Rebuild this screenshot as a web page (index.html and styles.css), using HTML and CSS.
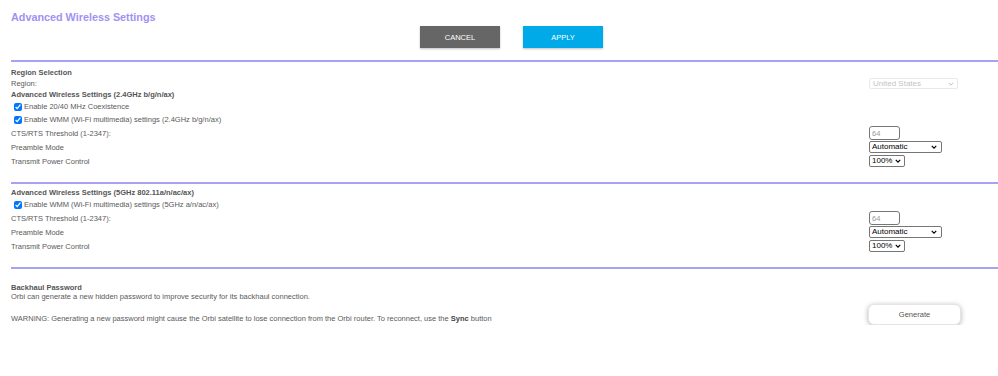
FILE: index.html
```html
<!DOCTYPE html>
<html lang="en">
<head>
  <meta charset="UTF-8" />
  <meta name="viewport" content="width=device-width, initial-scale=1.0" />
  <title>Advanced Wireless Settings</title>
  <link rel="stylesheet" href="styles.css">
</head>
<body>
  <div class="page">
    <h1 class="title">Advanced Wireless Settings</h1>

    <div class="actions">
      <button type="button" class="btn btn-cancel">CANCEL</button>
      <button type="button" class="btn btn-apply">APPLY</button>
    </div>

    <section class="block block-24">
      <div class="row row-head"><span class="head">Region Selection</span></div>
      <div class="row row-head">
        <span>Region:</span>
        <span class="pick pick-region">
          <select class="sel-region" disabled>
            <option>United States</option>
          </select>
          <svg viewBox="0 0 8 5"><path d="M1 1 L4 4 L7 1" /></svg>
        </span>
      </div>
      <div class="row row-head"><span class="head">Advanced Wireless Settings (2.4GHz b/g/n/ax)</span></div>
      <div class="row row-check">
        <label><input type="checkbox" checked /> Enable 20/40 MHz Coexistence</label>
      </div>
      <div class="row row-check">
        <label><input type="checkbox" checked /> Enable WMM (Wi-Fi multimedia) settings (2.4GHz b/g/n/ax)</label>
      </div>
      <div class="row row-field">
        <span>CTS/RTS Threshold (1-2347):</span>
        <input type="text" class="txt-rts" value="64" />
      </div>
      <div class="row row-field">
        <span>Preamble Mode</span>
        <span class="pick pick-preamble">
          <select class="sel-preamble">
            <option>Automatic</option>
            <option>Long Preamble</option>
            <option>Short Preamble</option>
          </select>
          <svg viewBox="0 0 8 5"><path d="M1 1 L4 4 L7 1" /></svg>
        </span>
      </div>
      <div class="row row-field">
        <span>Transmit Power Control</span>
        <span class="pick pick-power">
          <select class="sel-power">
            <option>100%</option>
            <option>75%</option>
            <option>50%</option>
            <option>25%</option>
          </select>
          <svg viewBox="0 0 8 5"><path d="M1 1 L4 4 L7 1" /></svg>
        </span>
      </div>
    </section>

    <section class="block block-5">
      <div class="row row-head"><span class="head">Advanced Wireless Settings (5GHz 802.11a/n/ac/ax)</span></div>
      <div class="row row-check">
        <label><input type="checkbox" checked /> Enable WMM (Wi-Fi multimedia) settings (5GHz a/n/ac/ax)</label>
      </div>
      <div class="row row-field">
        <span>CTS/RTS Threshold (1-2347):</span>
        <input type="text" class="txt-rts" value="64" />
      </div>
      <div class="row row-field">
        <span>Preamble Mode</span>
        <span class="pick pick-preamble">
          <select class="sel-preamble">
            <option>Automatic</option>
            <option>Long Preamble</option>
            <option>Short Preamble</option>
          </select>
          <svg viewBox="0 0 8 5"><path d="M1 1 L4 4 L7 1" /></svg>
        </span>
      </div>
      <div class="row row-field">
        <span>Transmit Power Control</span>
        <span class="pick pick-power">
          <select class="sel-power">
            <option>100%</option>
            <option>75%</option>
            <option>50%</option>
            <option>25%</option>
          </select>
          <svg viewBox="0 0 8 5"><path d="M1 1 L4 4 L7 1" /></svg>
        </span>
      </div>
    </section>

    <section class="block block-backhaul">
      <div class="head">Backhaul Password</div>
      <div class="note">Orbi can generate a new hidden password to improve security for its backhaul connection.</div>
      <div class="row row-warn">
        <span>WARNING: Generating a new password might cause the Orbi satellite to lose connection from the Orbi router. To reconnect, use the <b>Sync</b> button</span>
        <button type="button" class="btn-generate">Generate</button>
      </div>
    </section>
  </div>
</body>
</html>
```

FILE: styles.css
```css
body {
  margin: 0;
  padding: 0;
  background: white;
  font-family: "Liberation Sans", Arial, sans-serif;
  font-size: 7.5px;
  color: #5a5a5a;
}
.page {
  padding: 10px 0 0 11px;
}
.title {
  margin: 0;
  font-size: 10.8px;
  line-height: 14px;
  font-weight: bold;
  color: #9f92f2;
}
.actions {
  display: flex;
  gap: 23px;
  padding-left: 409px;
  margin-top: 2px;
}
.btn {
  width: 80px;
  height: 22px;
  border: none;
  color: white;
  font-family: "Liberation Sans", Arial, sans-serif;
  font-size: 7.5px;
  cursor: pointer;
  box-shadow: 0 1px 2px rgba(0, 0, 0, 0.25);
}
.btn-cancel {
  background: #666666;
}
.btn-apply {
  background: #00aae8;
}
.block {
  border-top: 2px solid #a9a1f1;
  margin-top: 12px;
  padding-top: 5px;
}
.block-5 {
  margin-top: 14px;
  padding-top: 3px;
}
.block-backhaul {
  margin-top: 14px;
  padding-top: 14px;
}
.row {
  display: grid;
  grid-template-columns: 858px 1fr;
  align-items: center;
}
.row-head {
  height: 11px;
}
.row-check {
  height: 13px;
}
.row-field {
  height: 14px;
}
.head {
  font-weight: bold;
  color: #555555;
}
label {
  display: flex;
  align-items: center;
  gap: 2px;
}
input[type="checkbox"] {
  width: 8px;
  height: 8px;
  margin: 0 0 0 3px;
  accent-color: #0075ff;
}
.pick {
  position: relative;
  display: block;
}
.pick svg {
  position: absolute;
  top: 50%;
  width: 6px;
  height: 4px;
  margin-top: -2px;
  pointer-events: none;
  fill: none;
  stroke: #000000;
  stroke-width: 1.6;
}
select,
.txt-rts {
  display: block;
  font-family: "Liberation Sans", Arial, sans-serif;
  font-size: 8px;
  box-sizing: border-box;
  padding: 0 0 0 2px;
  margin: 0;
  border: 1px solid #767676;
  border-radius: 2px;
  background: white;
  color: black;
}
select {
  appearance: none;
  -webkit-appearance: none;
  line-height: 10px;
}
.sel-region {
  width: 89px;
  height: 11px;
  border-color: #e0e0e0;
  color: #aaaaaa;
  padding-left: 3px;
}
.pick-region svg {
  left: 79px;
  stroke: #aaaaaa;
  stroke-width: 1;
}
.txt-rts {
  width: 31px;
  height: 14px;
  font-size: 7.5px;
  color: #9a9a9a;
  border-radius: 3px;
}
.sel-preamble {
  width: 73px;
  height: 12px;
}
.pick-preamble svg {
  left: 62px;
}
.sel-power {
  width: 36px;
  height: 12px;
}
.pick-power svg {
  left: 26px;
}
.note {
  line-height: 10px;
}
.row-warn {
  margin-top: 2px;
  height: 21px;
}
.row-warn span {
  padding-top: 7px;
}
.row-warn b {
  color: #444444;
}
.btn-generate {
  width: 93px;
  height: 21px;
  margin-left: -1px;
  background: white;
  border: 1px solid #e4e4e4;
  border-radius: 6px;
  box-shadow: 0 1px 5px rgba(0, 0, 0, 0.3);
  font-family: "Liberation Sans", Arial, sans-serif;
  font-size: 7.5px;
  color: #555555;
  cursor: pointer;
}
```
